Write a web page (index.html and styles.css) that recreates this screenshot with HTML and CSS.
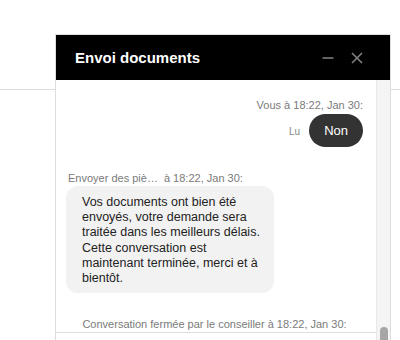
FILE: index.html
```html
<!DOCTYPE html>
<html lang="fr">
<head>
    <meta charset="UTF-8">
    <meta name="viewport" content="width=device-width, initial-scale=1.0">
    <title>Envoi documents</title>
    <link rel="stylesheet" href="styles.css">
</head>
<body>
    <div class="page-top"></div>

    <div class="chat">
        <div class="chat-head">
            <span class="chat-title">Envoi documents</span>
            <div class="chat-actions">
                <button type="button" class="icon-btn" aria-label="Réduire">
                    <svg width="12" height="12" viewBox="0 0 12 12"><path d="M0.5 6h11"/></svg>
                </button>
                <button type="button" class="icon-btn" aria-label="Fermer">
                    <svg width="12" height="12" viewBox="0 0 12 12"><path d="M1 1l10 10M11 1L1 11"/></svg>
                </button>
            </div>
        </div>

        <div class="chat-body">
            <div class="chat-main">
                <div class="messages">
                    <div class="msg msg-out">
                        <div class="msg-meta">Vous à 18:22, Jan 30:</div>
                        <div class="msg-row">
                            <span class="msg-status">Lu</span>
                            <div class="bubble bubble-out">Non</div>
                        </div>
                    </div>

                    <div class="msg msg-in">
                        <div class="msg-meta"><span class="msg-author">Envoyer des piè…</span> à 18:22, Jan 30:</div>
                        <div class="bubble bubble-in">Vos documents ont bien été envoyés, votre demande sera traitée dans les meilleurs délais. Cette conversation est maintenant terminée, merci et à bientôt.</div>
                    </div>

                    <div class="msg-system">Conversation fermée par le conseiller à 18:22, Jan 30:</div>
                </div>
                <div class="composer"></div>
            </div>
            <div class="scrollbar"><div class="scroll-thumb"></div></div>
        </div>
    </div>
</body>
</html>
```

FILE: styles.css
```css
:root {
    --border: #dddddd;
    --meta: #7a7a7a;
    --text: #222222;
    --bubble-in: #f2f2f2;
    --bubble-out: #333333;
}

body {
    margin: 0;
    background: #ffffff;
    font-family: "Liberation Sans", Helvetica, Arial, sans-serif;
    color: var(--text);
}

.page-top {
    height: 89px;
    border-bottom: 1px solid var(--border);
}

/* fenêtre de chat flottante */
.chat {
    position: fixed;
    top: 34px;
    left: 55px;
    width: 334px;
    border: 1px solid var(--border);
    background: #ffffff;
}

.chat-head {
    height: 45px;
    background: #000000;
    display: flex;
    align-items: center;
    justify-content: space-between;
    padding: 0 27px 0 19px;
}
.chat-title { color: #ffffff; font-size: 15px; font-weight: 700; }
.chat-actions { display: flex; gap: 17px; }
.icon-btn {
    border: none; background: none; padding: 0; margin: 0;
    width: 12px; height: 12px; display: block; cursor: pointer;
}
.icon-btn svg { display: block; }
.icon-btn path { stroke: #858585; stroke-width: 1.5; fill: none; }

.chat-body { display: flex; height: 281px; }
.chat-main { flex: 1; display: flex; flex-direction: column; }

.messages { padding: 19px 13px 1px 10px; }

.msg-meta { font-size: 11px; line-height: 13px; color: var(--meta); white-space: nowrap; }
.msg-out .msg-meta { text-align: right; margin-bottom: 2px; }
.msg-in { margin-top: 25px; }
.msg-in .msg-meta { padding-left: 2px; margin-bottom: 1px; }
.msg-author { margin-right: 3px; }

.msg-row { display: flex; justify-content: flex-end; align-items: center; gap: 9px; }
.msg-status { font-size: 10px; color: #8a8a8a; padding-top: 2px; }

.bubble-out {
    background: var(--bubble-out); color: #ffffff;
    font-size: 13px; line-height: 15px;
    padding: 9px 15px; border-radius: 17px;
}
.bubble-in {
    width: 208px; box-sizing: border-box;
    background: var(--bubble-in);
    font-size: 12.5px; line-height: 15.2px;
    padding: 9px 12px 7px 16px; border-radius: 12px;
}

.msg-system {
    margin-top: 25px; text-align: center;
    font-size: 11px; line-height: 13px; color: var(--meta);
}

.composer { flex: 1; border-top: 1px solid var(--border); }

.scrollbar {
    width: 13px; background: #f4f4f4; border-left: 1px solid #e8e8e8;
    display: flex; flex-direction: column; align-items: center;
}
.scroll-thumb {
    margin-top: auto; margin-bottom: 1px;
    width: 8px; height: 33px; border-radius: 4px; background: #a6a6a6;
}
```
